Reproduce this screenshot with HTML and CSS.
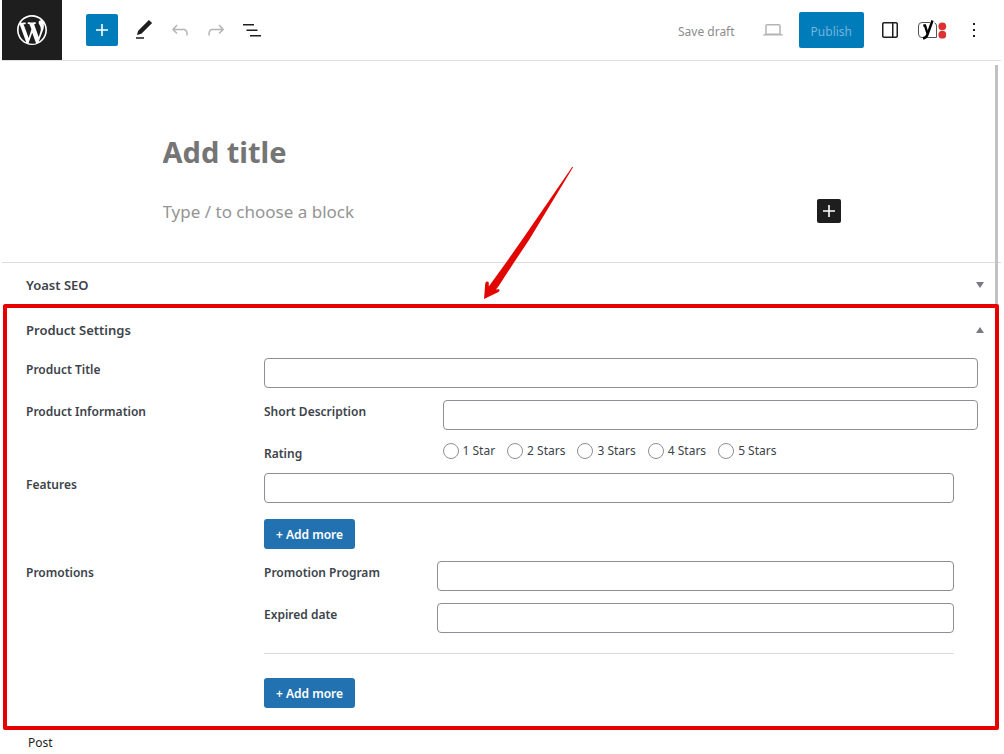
FILE: index.html
```html
<!DOCTYPE html>
<html lang="en">
<head>
  <meta charset="UTF-8">
  <meta name="viewport" content="width=device-width, initial-scale=1">
  <title>Add New Post</title>
  <link rel="stylesheet" href="styles.css">
</head>
<body>

  <!-- Toolbar -->
  <header class="toolbar">
    <a href="#" class="wp-logo" aria-label="View Posts">
      <svg width="36" height="36" viewBox="-2 -2 24 24"><path d="M20 10c0-5.51-4.49-10-10-10C4.48 0 0 4.49 0 10c0 5.52 4.48 10 10 10 5.51 0 10-4.48 10-10zM7.78 15.37L4.37 6.22c.55-.02 1.17-.08 1.17-.08.5-.06.44-1.13-.06-1.11 0 0-1.45.11-2.37.11-.18 0-.37 0-.58-.01C4.12 2.69 6.87 1.11 10 1.11c2.33 0 4.45.87 6.05 2.34-.68-.11-1.65.39-1.65 1.58 0 .74.45 1.36.9 2.1.35.61.55 1.36.55 2.46 0 1.49-1.4 5-1.4 5l-3.03-8.37c.54-.02.82-.17.82-.17.5-.05.44-1.25-.06-1.22 0 0-1.44.12-2.38.12-.87 0-2.33-.12-2.33-.12-.5-.03-.56 1.2-.06 1.22l.92.08 1.26 3.41zM17.41 10c.24-.64.74-1.87.43-4.25.7 1.29 1.05 2.71 1.05 4.25 0 3.29-1.73 6.24-4.4 7.78.97-2.59 1.94-5.2 2.92-7.78zM6.1 18.09C3.12 16.65 1.11 13.53 1.11 10c0-1.3.23-2.48.72-3.59C3.25 10.3 4.67 14.2 6.1 18.09zM10.13 11.79l2.58 6.98c-.86.29-1.76.45-2.71.45-.79 0-1.57-.11-2.29-.33.81-2.38 1.62-4.74 2.42-7.1z"/></svg>
    </a>

    <div class="tools">
      <button class="inserter" aria-label="Toggle block inserter">
        <svg width="24" height="24" viewBox="0 0 24 24"><path d="M18 11.2h-5.2V6h-1.6v5.2H6v1.6h5.2V18h1.6v-5.2H18z"/></svg>
      </button>
      <button class="icon-btn" aria-label="Tools">
        <svg width="24" height="24" viewBox="0 0 24 24"><path d="M20.1 5.1L16.9 2 6.2 12.7l-1.3 4.4 4.5-1.3L20.1 5.1zM4 20.8h8v-1.5H4v1.5z"/></svg>
      </button>
      <button class="icon-btn" aria-label="Undo" disabled>
        <svg width="24" height="24" viewBox="0 0 24 24"><path d="M18.3 11.7c-.6-.6-1.4-.9-2.3-.9H6.7l2.9-3.3-1.1-1-4.5 5L8.5 16l1-1-2.7-2.7H16c.5 0 .9.2 1.3.5 1 1 1 3.4 1 4.5v.3h1.5v-.2c0-1.5 0-4.3-1.5-5.7z"/></svg>
      </button>
      <button class="icon-btn" aria-label="Redo" disabled>
        <svg width="24" height="24" viewBox="0 0 24 24"><path d="M15.6 6.5l-1.1 1 2.9 3.3H8c-.9 0-1.7.3-2.3.9-1.4 1.5-1.4 4.2-1.4 5.6v.2h1.5v-.3c0-1.1 0-3.5 1-4.5.3-.3.7-.5 1.3-.5h9.2L14.5 15l1.1 1.1 4.6-4.6-4.6-5z"/></svg>
      </button>
      <button class="icon-btn" aria-label="List view">
        <svg width="24" height="24" viewBox="0 0 24 24"><path d="M3 6h11v1.5H3V6zm3.5 5.5h11V13h-11v-1.5zM21 17H10v1.5h11V17z"/></svg>
      </button>
    </div>

    <div class="settings">
      <button class="save-draft" disabled>Save draft</button>
      <button class="icon-btn" aria-label="Preview" disabled>
        <svg width="24" height="24" viewBox="0 0 24 24"><path d="M20.5 16h-.7V8c0-1.1-.9-2-2-2H6.2c-1.1 0-2 .9-2 2v8h-.7c-.8 0-1.5.7-1.5 1.5h20c0-.8-.7-1.5-1.5-1.5zM5.7 8c0-.3.2-.5.5-.5h11.6c.3 0 .5.2.5.5v7.6H5.7V8z"/></svg>
      </button>
      <button class="publish" disabled>Publish</button>
      <button class="icon-btn" aria-label="Settings">
        <svg width="24" height="24" viewBox="0 0 24 24"><path d="M18 4H6c-1.1 0-2 .9-2 2v12c0 1.1.9 2 2 2h12c1.1 0 2-.9 2-2V6c0-1.1-.9-2-2-2zm-4 14.5H6c-.3 0-.5-.2-.5-.5V6c0-.3.2-.5.5-.5h8v13zm4.5-.5c0 .3-.2.5-.5.5h-2.5v-13H18c.3 0 .5.2.5.5v12z"/></svg>
      </button>
      <button class="yoast-btn" aria-label="Yoast SEO">
        <svg width="32" height="24" viewBox="0 0 32 24">
          <path d="M14 4.500H6Q2.500 4.500 2.500 8v8Q2.500 19.500 6 19.500h1M11 19.500h9.500V8Q20.500 5.500 18.500 4.800" fill="none" stroke="#555" stroke-width="1"/>
          <path d="M7.300 7.500H9l2.500 8" fill="none" stroke="#000" stroke-width="2.400"/>
          <path d="M16.500 2.500L11.500 16.500q-1.300 3.700-4.500 3.700" fill="none" stroke="#000" stroke-width="2.400"/>
          <circle cx="26.300" cy="8.300" r="3.900" fill="#dc3232"/>
          <circle cx="26.300" cy="16.700" r="3.900" fill="#dc3232"/>
        </svg>
      </button>
      <button class="icon-btn" aria-label="Options">
        <svg width="24" height="24" viewBox="0 0 24 24"><path d="M13 19h-2v-2h2v2zm0-6h-2v-2h2v2zm0-6h-2V5h2v2z"/></svg>
      </button>
    </div>
  </header>

  <main class="editor">
    <div class="scrollbar"></div>

    <!-- Writing area -->
    <section class="canvas">
      <div class="canvas-inner">
        <input class="post-title" type="text" placeholder="Add title" aria-label="Add title">
        <div class="block-row">
          <input class="block-input" type="text" placeholder="Type / to choose a block" aria-label="Add default block">
          <button class="add-block" aria-label="Add block">
            <svg width="24" height="24" viewBox="0 0 24 24"><path d="M18 11.2h-5.2V6h-1.6v5.2H6v1.6h5.2V18h1.6v-5.2H18z"/></svg>
          </button>
        </div>
      </div>
    </section>

    <!-- Yoast SEO meta box -->
    <section class="metabox">
      <h2>Yoast SEO</h2>
      <button class="toggle" aria-label="Open Yoast SEO">
        <svg width="8" height="6" viewBox="0 0 8 6"><path d="M0 0h8L4 6z"/></svg>
      </button>
    </section>
  </main>

  <!-- Product Settings meta box -->
  <section class="highlight">
    <svg class="pointer" width="92" height="134" viewBox="0 0 92 134"><path d="M90.500-.5L46 73 30 97 16 118.500 13 122.500l3-.3q1.500 1.300-.5 2.800L1 132 2.300 116q1.700-2.500 3.500-.5V119.500L9 115l14.500-20L41 70 89.500-.5z"/></svg>

    <div class="metabox-head">
      <h2>Product Settings</h2>
      <button class="toggle" aria-label="Close Product Settings">
        <svg width="8" height="6" viewBox="0 0 8 6"><path d="M0 6h8L4 0z"/></svg>
      </button>
    </div>

    <form class="fields">
      <div class="field">
        <label for="product-title">Product Title</label>
        <input type="text" id="product-title">
      </div>

      <div class="field">
        <span class="label">Product Information</span>
        <div class="group">
          <div class="field">
            <label for="short-desc">Short Description</label>
            <input type="text" id="short-desc">
          </div>
          <div class="field">
            <span class="label" id="rating-label">Rating</span>
            <div class="stars" role="radiogroup" aria-labelledby="rating-label">
              <label><input type="radio" name="rating">1 Star</label>
              <label><input type="radio" name="rating">2 Stars</label>
              <label><input type="radio" name="rating">3 Stars</label>
              <label><input type="radio" name="rating">4 Stars</label>
              <label><input type="radio" name="rating">5 Stars</label>
            </div>
          </div>
        </div>
      </div>

      <div class="field">
        <label for="features">Features</label>
        <div class="clones">
          <input type="text" id="features">
          <button type="button" class="add-more">+ Add more</button>
        </div>
      </div>

      <div class="field">
        <span class="label">Promotions</span>
        <div class="clones">
          <div class="group promo">
            <div class="field">
              <label for="program">Promotion Program</label>
              <input type="text" id="program">
            </div>
            <div class="field">
              <label for="expired">Expired date</label>
              <input type="text" id="expired">
            </div>
          </div>
          <button type="button" class="add-more">+ Add more</button>
        </div>
      </div>
    </form>
  </section>

  <footer class="breadcrumb">Post</footer>

</body>
</html>
```

FILE: styles.css
```css
/* RESET */
* {
  margin: 0;
  padding: 0;
  box-sizing: border-box;
}

body {
  background: #fff;
  color: #3c434a;
  font-family: 'Noto Sans', 'Open Sans', sans-serif;
  font-size: 12px;
  padding: 0 3px 0 2px;
}

button,
input {
  font: inherit;
}

button {
  display: flex;
  align-items: center;
  justify-content: center;
  flex: none;
  border: none;
  background: none;
  color: #1e1e1e;
  cursor: pointer;
}

svg {
  display: block;
  fill: currentColor;
}

/* TOOLBAR */
.toolbar {
  display: flex;
  align-items: center;
  border-bottom: 1px solid #e0e0e0;
}

.wp-logo {
  display: flex;
  align-items: center;
  justify-content: center;
  width: 60px;
  height: 60px;
  background: #1e1e1e;
  color: #fff;
}

.tools {
  display: flex;
  align-items: center;
  margin-left: 24px;
}

.inserter {
  width: 32px;
  height: 32px;
  margin-right: 8px;
  border-radius: 2px;
  background: #007cba;
  color: #fff;
}

.icon-btn {
  width: 36px;
  height: 36px;
}

.icon-btn:disabled {
  color: #b4b4b4;
}

.settings {
  display: flex;
  align-items: center;
  gap: 8px;
  margin-left: auto;
  padding-right: 9px;
}

.save-draft,
.publish {
  height: 36px;
  padding: 2px 12px 0;
}

.save-draft {
  color: #8c8c8c;
}

.publish {
  border-radius: 2px;
  background: #007cba;
  color: #72b6da;
}

.yoast-btn {
  width: 32px;
  height: 36px;
}

/* WRITING AREA */
.editor {
  position: relative;
}

.scrollbar {
  position: absolute;
  top: 4px;
  right: 3px;
  bottom: 0;
  width: 3px;
  background: #c1c1c1;
}

.canvas {
  padding: 68px 16px 37px;
}

.canvas-inner {
  max-width: 678px;
  margin: 0 auto;
}

.canvas input {
  display: block;
  width: 100%;
  border: none;
  outline: none;
  background: none;
}

.post-title {
  height: 44px;
  font-size: 29px;
  font-weight: 700;
}

.post-title::placeholder {
  color: #757575;
}

.block-row {
  display: flex;
  align-items: center;
  margin-top: 24px;
}

.block-input {
  height: 28px;
  font-size: 17px;
}

.block-input::placeholder {
  color: #949494;
}

.add-block {
  width: 24px;
  height: 24px;
  border-radius: 2px;
  background: #1e1e1e;
  color: #fff;
}

/* META BOXES */
.metabox,
.metabox-head {
  display: flex;
  align-items: center;
  justify-content: space-between;
}

.metabox {
  height: 42px;
  padding: 2px 17px 0 24px;
  border-top: 1px solid #dcdcdc;
}

h2 {
  font-size: 13px;
  font-weight: 600;
}

.toggle {
  width: 8px;
  height: 20px;
  color: #787c82;
}

.highlight {
  position: relative;
  margin: 0 2px 0 1px;
  padding: 0 17px 18px 19px;
  border: 4px solid #e60000;
  border-radius: 2px;
}

.highlight .metabox-head {
  height: 44px;
  margin-bottom: 6px;
}

.highlight .toggle {
  margin-right: -6px;
}

.pointer {
  position: absolute;
  left: 476px;
  top: -141px;
  fill: #e10600;
}

/* FIELDS */
.fields,
.group {
  display: flex;
  flex-direction: column;
  gap: 12px;
}

.field {
  display: grid;
  grid-template-columns: minmax(0, 1fr) minmax(0, 3fr);
  align-items: start;
}

.field > label,
.label {
  padding-top: 5px;
  line-height: 14px;
  font-weight: 600;
}

input[type="text"] {
  width: 100%;
}

.fields input[type="text"] {
  height: 30px;
  padding: 0 8px;
  border: 1px solid #8c8f94;
  border-radius: 4px;
}

.stars {
  display: flex;
  gap: 12px;
}

.stars label {
  display: flex;
  align-items: center;
  gap: 4px;
  line-height: 18px;
}

.stars input {
  appearance: none;
  width: 16px;
  height: 16px;
  border: 1px solid #8c8f94;
  border-radius: 50%;
  background: #fff;
}

.clones {
  padding-right: 24px;
}

.add-more {
  height: 30px;
  margin-top: 16px;
  padding: 0 12px;
  border-radius: 3px;
  background: #2271b1;
  color: #fff;
  font-weight: 600;
}

.promo {
  padding-bottom: 20px;
  border-bottom: 1px solid #dcdcde;
}

.promo + .add-more {
  margin-top: 24px;
}

/* FOOTER */
.breadcrumb {
  padding: 5px 26px 0;
  color: #1e1e1e;
  line-height: 16px;
}
```
